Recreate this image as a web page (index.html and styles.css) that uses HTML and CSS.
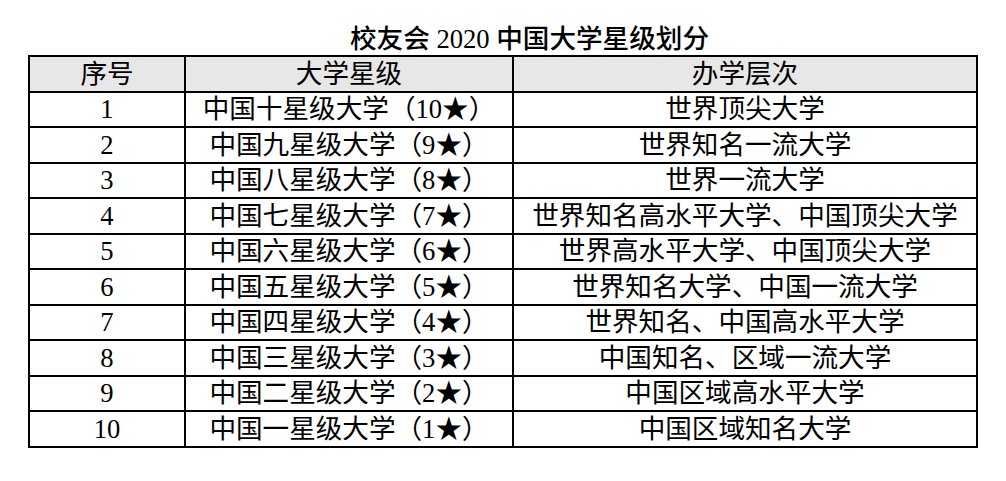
FILE: index.html
```html
<!DOCTYPE html>
<html lang="zh-CN">
<head>
<meta charset="utf-8">
<title>校友会 2020 中国大学星级划分</title>
<link rel="stylesheet" href="styles.css">
</head>
<body>
<div class="page">
  <h1 class="title">校友会 2020 中国大学星级划分</h1>
  <table class="grid">
    <colgroup>
      <col class="c1"><col class="c2"><col class="c3">
    </colgroup>
    <thead>
      <tr><th>序号</th><th>大学星级</th><th>办学层次</th></tr>
    </thead>
    <tbody>
      <tr><td>1</td><td>中国十星级大学（10★）</td><td>世界顶尖大学</td></tr>
      <tr><td>2</td><td>中国九星级大学（9★）</td><td>世界知名一流大学</td></tr>
      <tr><td>3</td><td>中国八星级大学（8★）</td><td>世界一流大学</td></tr>
      <tr><td>4</td><td>中国七星级大学（7★）</td><td>世界知名高水平大学、中国顶尖大学</td></tr>
      <tr><td>5</td><td>中国六星级大学（6★）</td><td>世界高水平大学、中国顶尖大学</td></tr>
      <tr><td>6</td><td>中国五星级大学（5★）</td><td>世界知名大学、中国一流大学</td></tr>
      <tr><td>7</td><td>中国四星级大学（4★）</td><td>世界知名、中国高水平大学</td></tr>
      <tr><td>8</td><td>中国三星级大学（3★）</td><td>中国知名、区域一流大学</td></tr>
      <tr><td>9</td><td>中国二星级大学（2★）</td><td>中国区域高水平大学</td></tr>
      <tr><td>10</td><td>中国一星级大学（1★）</td><td>中国区域知名大学</td></tr>
    </tbody>
  </table>
</div>
</body>
</html>
```
FILE: styles.css
```css
html, body {
  margin: 0;
  padding: 0;
  background: #ffffff;
}
body {
  font-family: "Liberation Serif", "Noto Sans CJK SC", serif;
  color: #000000;
}
.page {
  width: 1006px;
  height: 481px;
  padding: 24px 0 0 28px;
  box-sizing: border-box;
}
.title {
  margin: 0;
  width: 947px;
  padding-left: 56px;
  box-sizing: border-box;
  text-align: center;
  font-size: 26.6px;
  line-height: 31px;
  font-weight: 500;
}
.grid {
  width: 948px;
  border-collapse: collapse;
  table-layout: fixed;
  font-size: 26.6px;
}
.c1 { width: 156px; }
.c2 { width: 328px; }
.c3 { width: 464px; }
.grid th, .grid td {
  border: 2px solid #000000;
  height: 33.5px;
  padding: 0;
  text-align: center;
  vertical-align: middle;
  line-height: 30px;
  white-space: nowrap;
  overflow: hidden;
}
.grid th {
  background: #e7e7e7;
  font-weight: 400;
}
```
